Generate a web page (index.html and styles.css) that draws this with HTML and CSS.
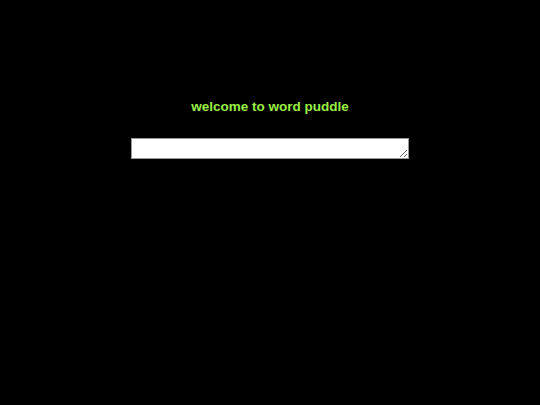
FILE: index.html
```html
<!DOCTYPE html>
<html>
<head>
<meta charset="utf-8">
<link rel="stylesheet" href="styles.css">
</head>
<body>
<div class="page">
  <h1 class="title">welcome to word puddle</h1>
  <textarea class="entry" rows="1"></textarea>
</div>
</body>
</html>
```
FILE: styles.css
```css
html, body {
  margin: 0;
  padding: 0;
  background: #000;
  height: 100%;
}
.page {
  display: flex;
  flex-direction: column;
  align-items: center;
  padding-top: 99px;
  font-family: "Liberation Sans", Arial, sans-serif;
}
.title {
  margin: 0;
  font-size: 13.5px;
  font-weight: bold;
  color: #99ee44;
  line-height: 16px;
}
.entry {
  margin-top: 23px;
  width: 278px;
  height: 21px;
  box-sizing: border-box;
  border: 1px solid #999;
  background: #fff;
  padding: 2px;
  font-family: "Liberation Mono", monospace;
  font-size: 13px;
}
```
